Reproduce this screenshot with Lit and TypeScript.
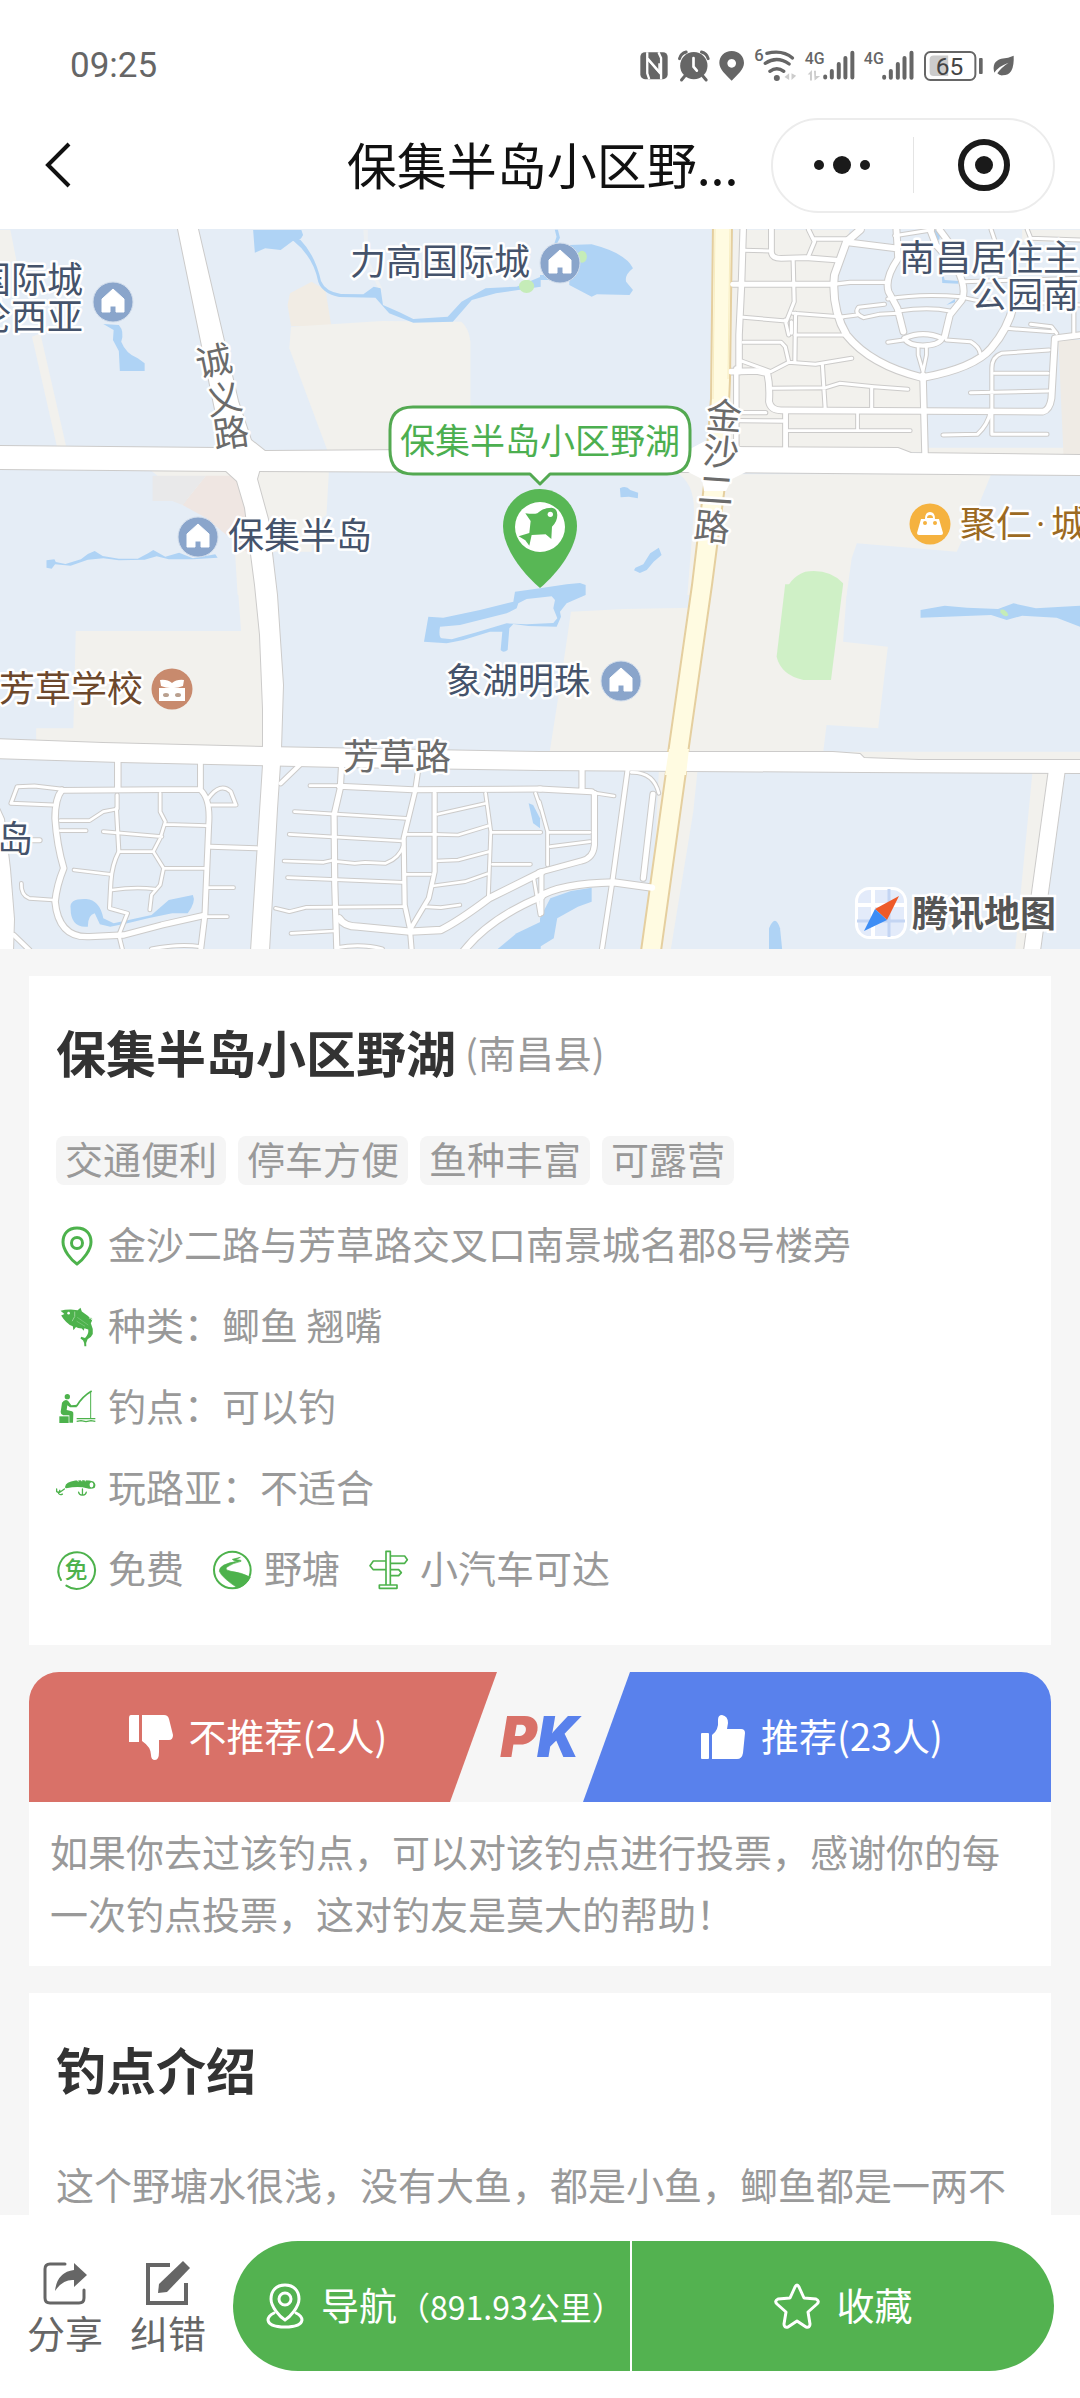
import { LitElement, html, svg, css } from "lit";
import { customElement } from "lit/decorators.js";

/* ---------- map data ---------- */

type Tile = "nw" | "ne" | "sw" | "se" | "lake" | "page";

const tileTransform: Record<Tile, string> = {
  nw: "translate(0 -4) scale(.3444 .3333)",
  ne: "translate(540 -4) scale(.3444 .3333)",
  sw: "translate(0 356) scale(.3444 .3333)",
  se: "translate(540 356) scale(.3444 .3333)",
  lake: "translate(380 166) scale(.3333)",
  page: "",
};

const LAND = "#f2f1ed";
const WATER = "#afd3f5";
const GREEN = "#cff0c6";

const areas: [Tile, string, string][] = [
  ["nw", LAND, "M0 14H30L48 108L0 118Z"],
  ["nw", LAND, "M93 335L117 325L192 664H165Z"],
  ["nw", "#f1ece4", "M842 205L905 170L945 195L962 303H845L835 240Z"],
  ["nw", LAND, "M845 305L1110 288L1340 290Q1362 310 1366 350V680H952L840 370Z"],
  ["nw", "#edf0f2", "M1055 14H1068V100L1112 195L1098 190L1060 100Z"],
  ["nw", LAND, "M440 738H955L948 870L905 900V980H770L745 1110H690L680 940L600 870Z"],
  ["nw", "#efe6e2", "M598 752H695L720 800V985L600 880L530 840Z"],
  ["nw", "#e9e9ea", "M443 752H598L530 840L500 828H443Z"],
  ["ne", LAND, "M562 14H900L850 180Q860 260 885 320Q940 410 1110 455V682H545Z"],
  ["ne", LAND, "M1400 14H1568V50H1400Z"],
  ["ne", LAND, "M1112 668H1568V690H1112Z"],
  ["ne", "#efebe5", "M1505 345H1568V690H1520Z"],
  ["ne", LAND, "M395 742Q460 780 444 900L428 1110H480L560 742Z"],
  ["ne", LAND, "M540 748H1310L1270 850L1210 980L920 955L905 1000L890 1112H480Z"],
  ["ne", GREEN, "M710 1112Q720 1060 770 1040Q840 1030 880 1075V1112Z"],
  ["sw", LAND, "M220 138H700L690 0H745L770 490L105 470V430H213Z"],
  ["se", LAND, "M90 80L245 72L445 68L373 502H28L60 290Z"],
  ["se", LAND, "M490 0H892L880 170L1010 185L982 430L832 420L822 505H425Z"],
  ["se", LAND, "M900 500H1568V528H900Z"],
  ["se", LAND, "M420 560H457L445 680L380 1092H350Z"],
  ["se", LAND, "M345 560H370L300 1092H292L330 880Z"],
  ["se", LAND, "M1430 560H1480L1408 1092H1380Z"],
  ["se", GREEN, "M712 -2H880L845 285L765 285Q700 270 687 215Z"],
  ["nw", WATER, "M735 15H875L880 30Q872 50 850 48L815 75L770 70L740 83Z"],
  ["nw", WATER, "M850 46L872 44Q915 90 932 168Q945 200 990 207L1055 208L1085 185L1105 190L1112 240L1160 262L1200 282L1300 275L1340 230L1410 190L1500 185L1570 155V185L1440 205L1370 225L1315 290L1200 293L1130 265L1090 218L985 216Q935 205 924 170Q910 95 850 46Z"],
  ["nw", "#c5ecb8", "M1507 184a22 20 0 1 0 44 0a22 20 0 1 0-44 0Z"],
  ["nw", WATER, "M300 297L345 300Q362 320 352 350Q365 385 400 400L420 415V438H348L345 378L328 345L330 315Z"],
  ["nw", WATER, "M135 1006L158 1003L162 1011L190 1017L235 1003L255 987L275 978L298 993L345 1001H400L430 985L445 975L480 995L520 983L560 1000L625 988L632 998L560 1003H490L455 994L420 1004L345 1006L300 1000L255 1004L205 1022L160 1018L150 1031L135 1028Z"],
  ["ne", WATER, "M43 14H52L58 38L50 55H42L48 35Z"],
  ["ne", WATER, "M0 150H30V165H0Z"],
  ["ne", WATER, "M85 60L150 58Q250 85 270 130Q245 150 250 170L270 195L260 210L165 208L150 215L85 180Z"],
  ["ne", "#c5ecb8", "M108 95a14 18 0 1 0 28 0a14 18 0 1 0-28 0Z"],
  ["ne", WATER, "M232 790Q250 780 262 795L285 803L284 820L258 815L234 817Z"],
  ["ne", WATER, "M345 968L353 990L330 1010L310 1035L290 1044L273 1036L277 1028L300 1018L320 985Z"],
  ["ne", WATER, "M1145 14H1162L1160 42L1150 50Z"],
  ["ne", WATER, "M1165 120L1175 165L1215 168V176L1168 174ZM1180 240L1205 222V232Z"],
  ["sw", WATER, "M205 970Q200 940 250 942Q290 945 300 1000L330 1015L440 990L490 945L560 930Q570 950 545 985L500 985L430 1000L370 1015L320 1025L290 1018L275 985Q255 990 255 1025Q205 1030 205 970Z"],
  ["sw", WATER, "M1535 655L1548 660L1568 700V730L1548 715Z"],
  ["sw", WATER, "M1445 1092L1500 1045L1570 1010V1092Z"],
  ["se", WATER, "M0 1092V1000L30 940L90 918L150 908V950L110 965L50 1000L40 1060L0 1085Z"],
  ["se", WATER, "M1105 75L1175 62L1240 68L1330 72L1375 55L1440 70L1568 62V125L1500 98L1400 92L1355 105L1310 90L1180 95L1105 98Z"],
  ["se", "#c5ecb8", "M1337 74Q1352 70 1360 90Q1350 100 1337 82Z"],
  ["se", WATER, "M665 1092V1030Q683 985 697 1030L703 1092Z"],
  ["lake", WATER, "M405 590L480 580L560 568L600 564L617 570V600L560 625L540 650L543 665L530 695L445 693L400 687L388 700L383 765Q370 775 362 765L367 710L330 710L250 735L200 745L132 740L145 665L190 668L300 645L400 620ZM415 625L440 612L515 604L525 615L520 640L532 670L520 684L440 688L380 685L290 712L215 733L185 730Q175 725 180 695L240 690L380 655L410 640Z"],
];

const roads: [Tile, number, string][] = [
  /* north-east estate */
  ["ne", 16, "M590 14L585 180L578 330V440"],
  ["ne", 13, "M570 430V665"],
  ["ne", 14, "M672 14V80Q672 100 700 100L770 98L860 105"],
  ["ne", 9, "M590 76L670 78M735 105L738 230L715 290M730 290V325M712 285L722 330M740 330H890M735 265L880 276M590 277L715 288M742 265L740 410"],
  ["ne", 9, "M590 352H700L712 365L722 410M585 408L670 440L722 412L800 418L905 400M675 490L830 488L870 475L970 485L1068 493M820 420L828 550M963 485V550"],
  ["ne", 10, "M780 14L797 50L780 92M795 42H890M850 178L900 172L1010 172"],
  ["ne", 15, "M560 178H850"],
  ["ne", 20, "M930 14L890 50L855 150Q845 250 890 330Q960 420 1110 458Q1260 430 1310 370Q1360 310 1375 240"],
  ["ne", 17, "M895 52L1035 70M1035 14L1040 100Q1000 160 1012 200L1038 250L1055 320M1135 20L1150 60L1210 130Q1240 190 1225 225L1190 270L1175 335M1160 14L1200 70"],
  ["ne", 9, "M1030 32L1140 14M1010 222Q1100 205 1225 215M1230 218L1330 240M880 275L920 270M1040 265L985 268L940 278Q910 265 925 247L1000 238M1040 258Q1130 245 1190 258M1055 345L1010 352M1180 345L1250 350Q1275 365 1278 385"],
  ["ne", 13, "M1058 340Q1112 315 1168 340Q1160 360 1112 362Q1070 362 1058 340"],
  ["ne", 8, "M1098 365V390L1112 440L1122 390V365"],
  ["ne", 16, "M1112 450L1118 690"],
  ["ne", 17, "M555 440L630 438L660 445Q668 480 665 530Q670 556 700 556L1110 558L1460 560Q1480 555 1485 520L1495 340L1570 330"],
  ["ne", 9, "M1355 310L1490 320M1425 298L1485 305L1500 325M1550 200V330M1478 375L1340 385Q1312 395 1312 430V628H1472M1320 445H1475M1250 503L1475 498M1308 560Q1300 600 1270 628L1170 630"],
  ["ne", 9, "M1310 14L1325 60M1415 14L1425 40L1568 45M1230 170L1568 160M1400 230L1568 240"],
  ["ne", 10, "M580 563H655M580 587L705 588"],
  ["ne", 14, "M713 562V680"],
  ["ne", 8, "M720 617H1075M922 565V615"],
  /* south-west estate */
  ["sw", 16, "M342 520V610M180 615Q160 640 160 700Q165 780 185 850Q165 900 160 950Q170 1060 260 1055L360 1050L470 1020L590 992"],
  ["sw", 14, "M180 616L580 613Q612 640 606 720L595 990L583 1092M582 530V612"],
  ["sw", 9, "M175 612L100 603L50 605L32 655L155 660M605 640Q640 590 670 620L685 660L610 660M340 630V670M338 670L345 800Q325 840 322 890L318 970L370 985L345 1050L355 1092"],
  ["sw", 8, "M175 707H260L300 680L340 672M175 737H250M300 740L470 755M465 625V680L480 710L465 760L445 800L475 850L465 900L440 930L435 975M345 800H445M480 718L600 722M475 850H595M215 855L320 868M325 915Q390 905 450 912M605 908H678M590 995H660M62 895Q60 930 85 940L155 945"],
  ["sw", 12, "M612 785L745 790M60 766H115M40 1050L85 1095M815 595L875 535"],
  ["sw", 15, "M985 604L1200 614L1570 612M992 540L988 610L970 690L972 900L978 1092"],
  ["sw", 12, "M1215 550L1205 620L1172 760L1175 960L1190 1030L1195 1092M1262 625V860L1245 940L1190 1035"],
  ["sw", 8, "M900 602H985M855 680L1180 700M840 748L1170 768M825 828L940 832L970 825M835 878L1170 892M800 970L840 980L890 967L1170 965M845 1045L970 1038M980 830L1030 835L1060 832L1120 835Q1160 820 1172 780"],
  ["sw", 19, "M985 1000Q1000 1025 1040 1025L1190 1040L1280 1035Q1330 1010 1420 940L1572 862M1345 1100Q1420 1000 1572 935"],
  ["sw", 8, "M1180 748H1262L1330 750L1420 722M1270 688L1412 655M1175 868H1250M1262 828L1330 825L1420 800M1255 903L1350 890L1420 865M1230 965L1280 968L1335 960M1410 625L1425 740L1418 935M1425 742H1570M1430 838H1540M1555 625L1570 670M1550 880L1568 990"],
  ["sw", 9, "M440 1092Q520 1075 583 1085M978 1088Q1050 1075 1110 1092"],
  ["se", 15, "M-2 612L150 620M122 550V612M158 625V780Q155 820 120 828L-2 862"],
  ["se", 8, "M165 625L215 633M-2 650L22 740V840M22 742H145M30 785L145 770M265 562Q330 560 345 625"],
  ["se", 19, "M-2 935Q60 895 215 892L325 908"],
  ["se", 12, "M255 550L210 890L180 1092M4 870V985"],
  ["se", 15, "M328 628L300 880"],
];

const mainRoads: string[] = [
  "M-5 217L218 219L265 222L420 221L690 221L730 218L898 219L911 224L1085 226V246L700 243L540 243L225 242L-5 240Z",
  "M178 0H198L238 172L251 211L265 222L257 250L268 290L277 366L283 456L281 520L277 580L269 722H251L263 536V480L260 406L255 356L245 279L237 252L226 242L219 200Z",
  "M-5 510L103 514L265 518L540 523L833 523L860 525L864 529L919 531L1085 531V544L864 543L540 541L340 538L120 533L-5 529Z",
  "M1049 540H1065L1040 722H1024Z",
  "M-5 570L4 590L10 640L14 690L13 722H-5Z",
];

const yellowRoad =
  "M713 -5L711 170L704 256L692 356L668 524L666 543L641 722H661L686 543L688 524L712 356L726 249L730 150L732 -5Z";

type Label = {
  x: number;
  y: number;
  text: string;
  more?: { x: number; dy: number; text: string }[];
  fill?: string;
  anchor?: string;
  turn?: number;
};

const labels: Label[] = [
  { x: 83, y: 51, text: "国际城", more: [{ x: 83, dy: 37, text: "伦西亚" }], anchor: "end" },
  { x: 530, y: 33, text: "力高国际城", anchor: "end" },
  { x: 899, y: 29, text: "南昌居住主", more: [{ x: 971, dy: 37, text: "公园南" }] },
  { x: 228, y: 307, text: "保集半岛" },
  {
    x: 960,
    y: 295,
    text: "聚仁",
    more: [
      { x: 1036, dy: 0, text: "·" },
      { x: 1051, dy: 0, text: "城" },
    ],
    fill: "#9c6a22",
  },
  { x: -1, y: 460, text: "芳草学校", fill: "#6d482c" },
  { x: 446, y: 452, text: "象湖明珠" },
  { x: 343, y: 528, text: "芳草路", fill: "#6b6b6b" },
  { x: -3, y: 610, text: "岛" },
  { x: 214, y: 132, text: "诚", fill: "#6b6b6b", anchor: "middle", turn: -12 },
  { x: 224, y: 170, text: "义", fill: "#6b6b6b", anchor: "middle", turn: -12 },
  { x: 231, y: 204, text: "路", fill: "#6b6b6b", anchor: "middle", turn: -8 },
  { x: 724, y: 187, text: "金", fill: "#6b6b6b", anchor: "middle", turn: 4 },
  { x: 721, y: 223, text: "沙", fill: "#6b6b6b", anchor: "middle", turn: 6 },
  { x: 716, y: 261, text: "二", fill: "#6b6b6b", anchor: "middle", turn: 4 },
  { x: 712, y: 298, text: "路", fill: "#6b6b6b", anchor: "middle", turn: 6 },
];

const houses: [number, number][] = [
  [113, 73],
  [560, 34],
  [198, 308],
  [621, 452],
];

@customElement("spot-map")
class SpotMap extends LitElement {
  static styles = css`
    :host {
      display: block;
    }
    .map {
      display: block;
      width: 100%;
      aspect-ratio: 3 / 2;
      background: #e5edf6;
      font-family: "Noto Sans CJK SC", sans-serif;
    }
    .label {
      font-size: 36px;
      stroke: #fff;
      stroke-width: 5px;
      stroke-linejoin: round;
      paint-order: stroke;
    }
    .dot {
      font-family: Roboto, sans-serif;
    }
    .brand {
      font-size: 36px;
      font-weight: 700;
      fill: #555;
      stroke: #fff;
      stroke-width: 5px;
      paint-order: stroke;
    }
    .bubble-text {
      font-size: 35px;
      fill: #4caf50;
    }
  `;

  private label(l: Label) {
    return svg`<text class="label" x=${l.x} y=${l.y + 13} fill=${l.fill ?? "#45536b"}
      text-anchor=${l.anchor ?? "start"}
      transform=${l.turn ? `rotate(${l.turn} ${l.x} ${l.y})` : ""}>${l.text}${(l.more ?? []).map(
        (m) => svg`<tspan class=${m.text === "·" ? "dot" : ""} x=${m.x} dy=${m.dy}>${m.text}</tspan>`
      )}</text>`;
  }

  render() {
    return html`<svg class="map" viewBox="0 0 1080 720" preserveAspectRatio="xMidYMid slice" role="img" aria-label="地图">
      <rect width="1080" height="720" fill="#e5edf6"></rect>
      ${areas.map(([t, fill, d]) => svg`<path transform=${tileTransform[t]} fill=${fill} fill-rule="evenodd" d=${d}></path>`)}
      <g fill="none" stroke="#cccbca" stroke-linecap="round" stroke-linejoin="round">
        ${roads.map(([t, w, d]) => svg`<path transform=${tileTransform[t]} stroke-width=${w + 6} d=${d}></path>`)}
        ${mainRoads.map((d) => svg`<path stroke-width="2" d=${d}></path>`)}
      </g>
      <path d=${yellowRoad} fill="#fffbe1" stroke="#e5cf9f" stroke-width="2"></path>
      <g fill="none" stroke="#fff" stroke-linecap="round" stroke-linejoin="round">
        ${roads.map(([t, w, d]) => svg`<path transform=${tileTransform[t]} stroke-width=${w} d=${d}></path>`)}
      </g>
      <g fill="#fff">${mainRoads.map((d) => svg`<path d=${d}></path>`)}</g>
      <path d="M690 220L705 212H729L746 221V243L732 250L726 262H704L702 250L688 243Z" fill="#fff"></path>
      <path d="M669 520H689L686 546H665Z" fill="#fffbe1"></path>
      <path d="M715 0L713 170M730 0L728 150" stroke="#f7ecc0" stroke-width="1"></path>
      ${labels.map((l) => this.label(l))}
      ${houses.map(
        ([x, y]) => svg`<g transform=${`translate(${x} ${y})`}>
          <circle r="20" fill="#8aa5cb" stroke="#d3deec" stroke-width="1"></circle>
          <path d="M0-13L11-3V10H3V4H-3V10H-11V-3Z" fill="#fff" stroke="#fff" stroke-linejoin="round"></path></g>`
      )}
      <g transform="translate(930 295)">
        <circle r="20.500" fill="#f5b23f"></circle>
        <path d="M-9-5H-5Q-5-12 0-12Q5-12 5-5H9L13 9Q13 11 11 11H-11Q-13 11-13 9Z" fill="#fff"></path>
        <path d="M-3-6Q-3-9 0-9Q3-9 3-6Z" fill="#f5b23f"></path>
        <circle cx="-5" cy="-1" r="2" fill="#f5b23f"></circle><circle cx="5" cy="-1" r="2" fill="#f5b23f"></circle>
      </g>
      <g transform="translate(172 460)">
        <circle r="20.500" fill="#c88a6d"></circle>
        <path d="M-12-9Q-5-10 0-6Q5-10 12-9L11-3Q6-1 2-1H13V12H-13V-1H-2Q-6-1-11-3Z" fill="#fff"></path>
        <ellipse cx="-6" cy="6" rx="3" ry="2" fill="#b9a08f"></ellipse><ellipse cx="6" cy="6" rx="3" ry="2" fill="#b9a08f"></ellipse>
      </g>
      <!-- selected spot -->
      <path d="M413 178H667Q690 178 690 201V221Q690 245 667 245H550L540 255L530 245H413Q390 245 390 221V201Q390 178 413 178Z"
        fill="#fff" stroke="#53a951" stroke-width="3" stroke-linejoin="round"></path>
      <text class="bubble-text" x="540" y="225" text-anchor="middle">保集半岛小区野湖</text>
      <path d="M540 260C561 260 577 277 577 297C577 318 559 343 540 359C521 343 503 318 503 297C503 277 519 260 540 260Z" fill="#58b755"></path>
      <circle cx="540" cy="298" r="25" fill="#fff"></circle>
      <g transform="translate(380 166) scale(.3333)">
        <path d="M436 355Q462 358 472 355Q490 338 515 338Q532 340 532 360Q532 380 516 395L514 432L497 418L455 420L448 452L436 436L416 424L448 414L452 378Z" fill="#58b755"></path>
        <circle cx="511" cy="358" r="8" fill="#fff"></circle>
      </g>
      <!-- map provider mark -->
      <g transform="translate(855 658)">
        <rect x="1.500" y="1.500" width="49" height="49" rx="13" fill="#e3ebfa" stroke="#fff" stroke-width="3"></rect>
        <path d="M18 2V50M2 18H50" stroke="#fff" stroke-width="4"></path>
        <path d="M34 2V50M2 34H50" stroke="#c4d5f3" stroke-width="3"></path>
        <path d="M44 9L32 33L20 22Z" fill="#ee5a29"></path>
        <path d="M20 22L32 33L9 44Z" fill="#3d8df5"></path>
      </g>
      <text class="brand" x="912" y="698">腾讯地图</text>
    </svg>`;
  }
}

/* ---------- icons ---------- */

const statusIcon = (x0: number, x1: number, body: unknown) =>
  html`<svg width=${Math.round((x1 - x0) / 3)} height="36" viewBox=${`${x0} 54 ${x1 - x0} 108`} aria-hidden="true">${body}</svg>`;

const bars = (x: number) =>
  svg`<g stroke="#666" stroke-width="12" stroke-linecap="round">
    <path d=${`M${x} 140V143M${x + 20} 123V143M${x + 41} 102V143M${x + 61} 84V143M${x + 82} 68V143`}></path></g>`;

const infoIcon = (viewBox: string, body: unknown) =>
  html`<svg class="info-icon" viewBox=${viewBox} aria-hidden="true">${body}</svg>`;

const pinIcon = infoIcon(
  "0 0 40 40",
  svg`<path d="M21 2C30 2 35 8 35 16C35 24 27 34 21 38C15 34 7 24 7 16C7 8 12 2 21 2Z" fill="none" stroke="#4db24c" stroke-width="3"></path>
  <circle cx="21" cy="17" r="5.500" fill="none" stroke="#4db24c" stroke-width="3"></circle>`
);
const fishIcon = infoIcon(
  "48 52 120 124",
  svg`<path d="M60 64Q72 60 92 60L113 62L122 54L126 66Q146 78 158 94L154 102Q162 118 160 136Q155 148 144 152Q138 162 140 174L134 174Q134 162 130 156L122 150L124 144L136 148Q148 136 146 122L134 118L132 126L126 119Q112 118 108 114L100 124L98 112Q78 104 62 78L72 74Z" fill="#4db24c"></path>
  <circle cx="85" cy="71" r="4" fill="#fff"></circle>
  <path d="M104 66Q108 82 96 96M148 88Q158 84 158 90" stroke="#9bd49a" stroke-width="3" fill="none"></path>
  <path d="M112 84L146 108M110 96L136 112" stroke="#8acb89" stroke-width="2"></path>`
);
const anglerIcon = infoIcon(
  "50 288 120 120",
  svg`<circle cx="84" cy="314" r="8" fill="#4db24c"></circle>
  <path d="M68 332Q76 320 86 326L96 340L114 338L112 346H92L84 340L82 354L98 358Q103 360 102 366L101 392H90V370H72Q64 368 64 360Z" fill="#4db24c"></path>
  <rect x="60" y="373" width="28" height="20" fill="#4db24c"></rect>
  <path d="M112 342Q128 314 157 297" stroke="#4db24c" stroke-width="5" fill="none"></path>
  <path d="M154 298V378" stroke="#4db24c" stroke-width="3"></path>
  <path d="M112 380H168M112 388L125 386L140 389L155 386L168 388" stroke="#4db24c" stroke-width="4" fill="none"></path>`
);
const lureIcon = infoIcon(
  "50 534 124 120",
  svg`<path d="M78 588Q80 572 110 568Q150 564 166 571Q176 580 170 590Q162 596 146 592Q120 584 82 592Q78 592 78 588Z" fill="#4db24c"></path>
  <path d="M116 564L119 571M128 563L130 570M140 563L141 570" stroke="#fff" stroke-width="3"></path>
  <ellipse cx="160" cy="581" rx="6" ry="8" fill="#fff"></ellipse>
  <path d="M132 594V612M120 604Q122 614 132 613Q142 614 144 604M76 594L62 604M52 594V602Q56 606 64 602M62 598L58 608Q62 614 70 610" stroke="#4db24c" stroke-width="4" fill="none" stroke-linecap="round"></path>`
);
const freeIcon = infoIcon(
  "51 778 120 120",
  svg`<path d="M66 868A55 55 0 1 1 82 885" fill="none" stroke="#4db24c" stroke-width="6" stroke-linecap="round"></path>
  <text x="111" y="863" font-size="68" font-weight="500" text-anchor="middle" fill="#4db24c">免</text>`
);
const pondIcon = infoIcon(
  "519 778 120 120",
  svg`<circle cx="580" cy="838" r="55" fill="none" stroke="#4db24c" stroke-width="6"></circle>
  <path d="M604 800L580 806Q584 812 596 812Q540 820 541 842Q550 862 596 892Q622 884 634 860Q610 846 576 842Q552 836 566 828Q580 818 606 812Q610 808 590 807Z" fill="#4db24c" stroke="#4db24c" stroke-width="2" stroke-linejoin="round"></path>`
);
const signIcon = infoIcon(
  "988 778 120 120",
  svg`<g fill="none" stroke="#4db24c" stroke-width="5" stroke-linejoin="round">
  <path d="M1042 882V782H1055V882M1022 883H1075V893H1022ZM1055 796H1098L1106 807L1098 818H1055M1042 811H1004L994 825L1004 837H1042M1055 837H1080L1088 846L1080 855H1055"></path></g>`
);

const thumbUp = html`<svg width="44" height="45" viewBox="0 0 44 45" fill="#fff" aria-hidden="true">
  <rect x="0" y="18" width="8" height="26" rx="1"></rect>
  <path d="M11 20Q18 15 17 5Q17 0 21 0Q27 1 27 8L26 14H40Q44 14 44 18L42 38Q41 44 36 44H11Z"></path>
</svg>`;
const thumbDown = html`<svg width="44" height="45" viewBox="0 0 44 45" fill="#fff" aria-hidden="true">
  <path d="M2 0H10V27H0V3Q0 0 2 0Z"></path>
  <path d="M13 0H35Q39 0 40 4L44 20Q44 25 40 25H30V37Q30 45 26 45Q22 45 22 40Q22 32 13 26Z"></path>
</svg>`;

/* ---------- page ---------- */

@customElement("app-root")
class AppRoot extends LitElement {
  static styles = css`
    :host {
      display: flex;
      flex-direction: column;
      height: 100vh;
      overflow: hidden;
      background: #f6f6f6;
      color: #999;
      font-family: "Noto Sans CJK SC", sans-serif;
      font-size: 38px;
      line-height: 52px;
    }
    * {
      box-sizing: border-box;
    }
    svg {
      flex: none;
      overflow: visible;
    }
    button {
      margin: 0;
      padding: 0;
      border: 0;
      background: none;
      color: inherit;
      font: inherit;
      display: flex;
      align-items: center;
      white-space: nowrap;
    }
    h1,
    h2,
    p,
    ul {
      margin: 0;
      padding: 0;
      font-weight: 400;
      list-style: none;
    }
    .top {
      flex: none;
      background: #fff;
    }
    .status {
      display: flex;
      align-items: center;
      justify-content: space-between;
      padding: 45px 66px 15px 70px;
      color: #666;
      font-family: Roboto, sans-serif;
      font-size: 35px;
      line-height: 41px;
    }
    .status-icons {
      display: flex;
      align-items: center;
      gap: 10px;
    }
    .nav {
      display: grid;
      grid-template-columns: 1fr auto 1fr;
      align-items: center;
      height: 128px;
      padding: 0 25px 0 44px;
    }
    .nav-title {
      color: #111;
      font-size: 50px;
      line-height: 60px;
      margin-left: -14px;
      padding-bottom: 5px;
    }
    .capsule {
      justify-self: end;
      display: flex;
      align-items: center;
      width: 284px;
      height: 95px;
      border: 2px solid #ececec;
      border-radius: 48px;
    }
    .capsule button {
      flex: 1;
      justify-content: center;
      height: 100%;
    }
    .capsule-line {
      width: 1px;
      height: 56px;
      background: #e4e4e4;
    }
    .scroll {
      flex: 1;
      min-height: 0;
      overflow: hidden;
      display: flex;
      flex-direction: column;
    }
    .cards {
      display: flex;
      flex-direction: column;
      flex: 1 0 auto;
      gap: 27px;
      padding: 27px 29px 0;
    }
    .card {
      background: #fff;
      padding: 48px 27px 47px;
    }
    .heading {
      display: flex;
      align-items: center;
      gap: 9px;
      padding-bottom: 5px;
    }
    .title {
      color: #333;
      font-size: 50px;
      line-height: 55px;
      font-weight: 700;
    }
    .tags {
      display: flex;
      gap: 12px;
      margin: 52px 0 32px;
    }
    .tag {
      padding: 0 9px 5px;
      border-radius: 8px;
      background: #f5f5f5;
      line-height: 44px;
    }
    .rows {
      display: flex;
      flex-direction: column;
      gap: 24px;
    }
    .row,
    .fact {
      display: flex;
      align-items: center;
    }
    .row {
      gap: 28px;
    }
    .fact {
      gap: 12px;
    }
    .fact-text {
      padding-bottom: 5px;
    }
    .info-icon {
      width: 40px;
      height: 40px;
    }
    .vote-head {
      display: grid;
      grid-template-columns: 1fr 86px 1fr;
      height: 130px;
    }
    .vote-button {
      justify-content: center;
      gap: 16px;
      color: #fff;
    }
    .vote-label {
      padding-bottom: 5px;
    }
    .vote-down {
      background: #d97168;
      border-radius: 30px 0 0 0;
      padding-right: 10px;
      clip-path: polygon(0 0, 100% 0, calc(100% - 47px) 100%, 0 100%);
    }
    .vote-up {
      background: #5981ec;
      border-radius: 0 30px 0 0;
      padding-left: 10px;
      clip-path: polygon(47px 0, 100% 0, 100% 100%, 0 100%);
    }
    .pk {
      display: flex;
      align-items: center;
      justify-content: center;
      font: italic 900 56px/60px Inter, sans-serif;
      color: #5981ec;
    }
    .pk-p {
      color: #d97168;
    }
    .vote-text {
      padding: 18px 21px 22px;
      background: #fff;
      line-height: 62px;
    }
    .intro {
      flex: 1 0 auto;
      padding-top: 48px;
      padding-bottom: 0;
    }
    .intro-text {
      margin-top: 62px;
    }
    .bar {
      flex: none;
      display: flex;
      align-items: center;
      gap: 27px;
      padding: 26px 26px 27px 27px;
      background: #fff;
    }
    .tool {
      flex-direction: column;
      gap: 8px;
      color: #666;
      line-height: 38px;
    }
    .actions {
      flex: 1;
      display: grid;
      grid-template-columns: 397fr 422fr;
      gap: 2px;
      height: 130px;
      border-radius: 65px;
      overflow: hidden;
      color: #fff;
    }
    .action {
      justify-content: center;
      background: #53b250;
      gap: 17px;
    }
    .action-label {
      padding-bottom: 5px;
    }
    .action-nav {
      justify-content: flex-start;
      padding-left: 33px;
    }
    .distance {
      font-size: 32px;
      margin-left: -16px;
    }
  `;

  private tags = ["交通便利", "停车方便", "鱼种丰富", "可露营"];

  private rows = [
    [{ icon: pinIcon, text: "金沙二路与芳草路交叉口南景城名郡8号楼旁" }],
    [{ icon: fishIcon, text: "种类：鲫鱼 翘嘴" }],
    [{ icon: anglerIcon, text: "钓点：可以钓" }],
    [{ icon: lureIcon, text: "玩路亚：不适合" }],
    [
      { icon: freeIcon, text: "免费" },
      { icon: pondIcon, text: "野塘" },
      { icon: signIcon, text: "小汽车可达" },
    ],
  ];

  private statusIcons() {
    return html`<div class="status-icons">
      ${statusIcon(62, 147, svg`<rect x="63" y="66" width="83" height="82" rx="14" fill="#666"></rect>
        <path d="M84 66V130L90 148M84 84L124 130M126 148V84L118 66" stroke="#fff" stroke-width="7" fill="none"></path>
        <path d="M88 91L120 128V100" stroke="#fff" stroke-width="5" fill="none"></path>`)}
      ${statusIcon(180, 272, svg`<circle cx="227" cy="107" r="41" fill="#666"></circle>
        <path d="M184 86Q188 70 204 66M270 86Q266 70 250 66M200 138L190 150M254 138L264 150" stroke="#666" stroke-width="9" fill="none" stroke-linecap="round"></path>
        <path d="M226 84V110L236 122" stroke="#fff" stroke-width="8" fill="none" stroke-linecap="round"></path>`)}
      ${statusIcon(305, 380, svg`<path fill-rule="evenodd" d="M343 63C365 63 380 79 380 99C380 118 361 134 343 152C325 134 306 118 306 99C306 79 321 63 343 63ZM343 87a13 13 0 1 0 .1 0Z" fill="#666"></path>`)}
      ${statusIcon(405, 530, svg`<text x="405" y="94" font-size="50" font-weight="500" fill="#666">6</text>
        <path d="M443 70Q490 58 520 84M438 100Q474 76 510 102M452 124Q473 108 494 124" stroke="#666" stroke-width="10" fill="none" stroke-linecap="round"></path>
        <circle cx="473" cy="144" r="9" fill="#666"></circle>
        <path d="M510 130V150L496 141ZM517 130V150L531 137Z" fill="#ccc"></path>`)}
      ${statusIcon(555, 703, svg`<text x="551" y="102" font-size="48" font-weight="500" fill="#666">4G</text>
        <path d="M560 134L573 120V152H567V134ZM579 122H585V138H598L581 152Z" fill="#ccc"></path>${bars(613)}`)}
      ${statusIcon(735, 881, svg`<text x="731" y="102" font-size="48" font-weight="500" fill="#666">4G</text>${bars(792)}`)}
      ${statusIcon(917, 1095, svg`<rect x="920" y="66" width="152" height="84" rx="16" fill="none" stroke="#666" stroke-width="6"></rect>
        <path d="M946 76H990V138H946Q934 138 934 126V88Q934 76 946 76Z" fill="#ccc"></path>
        <text x="994" y="135" font-size="74" text-anchor="middle" fill="#444">65</text>
        <rect x="1083" y="84" width="11" height="48" rx="3" fill="#666"></rect>`)}
      ${statusIcon(1115, 1178, svg`<path d="M1177 77Q1180 136 1144 136Q1134 137 1128 130Q1140 112 1162 98Q1132 108 1119 128Q1110 94 1140 86Q1162 84 1177 77Z" fill="#666"></path>`)}
    </div>`;
  }

  render() {
    return html`
      <header class="top">
        <div class="status"><span>09:25</span>${this.statusIcons()}</div>
        <div class="nav">
          <button aria-label="返回">
            <svg width="28" height="48" viewBox="0 0 28 48"><path d="M25 3L4 24L25 45" fill="none" stroke="#111" stroke-width="4"></path></svg>
          </button>
          <h1 class="nav-title">保集半岛小区野...</h1>
          <div class="capsule">
            <button aria-label="更多">
              <svg width="60" height="20" viewBox="0 0 60 20" fill="#1a1a1a"><circle cx="6" cy="10" r="5"></circle><circle cx="29" cy="10" r="9"></circle><circle cx="52" cy="10" r="5"></circle></svg>
            </button>
            <span class="capsule-line"></span>
            <button aria-label="关闭">
              <svg width="54" height="54" viewBox="0 0 54 54"><circle cx="28" cy="27" r="23" fill="none" stroke="#1a1a1a" stroke-width="6"></circle><circle cx="28" cy="27" r="9" fill="#1a1a1a"></circle></svg>
            </button>
          </div>
        </div>
      </header>
      <main class="scroll">
        <spot-map></spot-map>
        <div class="cards">
          <section class="card">
            <div class="heading"><h2 class="title">保集半岛小区野湖</h2><span>(南昌县)</span></div>
            <ul class="tags">${this.tags.map((t) => html`<li class="tag">${t}</li>`)}</ul>
            <div class="rows">
              ${this.rows.map(
                (row) => html`<div class="row">
                  ${row.map((f) => html`<div class="fact">${f.icon}<span class="fact-text">${f.text}</span></div>`)}
                </div>`
              )}
            </div>
          </section>
          <section>
            <div class="vote-head">
              <button class="vote-button vote-down">${thumbDown}<span class="vote-label">不推荐(2人)</span></button>
              <div class="pk"><span class="pk-p">P</span><span>K</span></div>
              <button class="vote-button vote-up">${thumbUp}<span class="vote-label">推荐(23人)</span></button>
            </div>
            <p class="vote-text">如果你去过该钓点，可以对该钓点进行投票，感谢你的每一次钓点投票，这对钓友是莫大的帮助！</p>
          </section>
          <section class="card intro">
            <h2 class="title">钓点介绍</h2>
            <p class="intro-text">这个野塘水很浅，没有大鱼，都是小鱼，鲫鱼都是一两不</p>
          </section>
        </div>
      </main>
      <footer class="bar">
        <button class="tool">
          <svg width="44" height="44" viewBox="0 0 44 44"><path d="M22 3H7Q2 3 2 8V37Q2 42 7 42H36Q41 42 41 37V29" fill="none" stroke="#666" stroke-width="3" stroke-linecap="round"></path><path d="M31 2L44 14L31 26V19Q20 18 12 30Q14 11 31 9Z" fill="#666"></path></svg>
          <span>分享</span>
        </button>
        <button class="tool">
          <svg width="44" height="44" viewBox="0 0 44 44"><path d="M24 4H2V42H40V22" fill="none" stroke="#666" stroke-width="4"></path><path d="M37 0L44 7L21 31L12 32L13 23Z" fill="#666"></path></svg>
          <span>纠错</span>
        </button>
        <div class="actions">
          <button class="action action-nav">
            <svg width="38" height="46" viewBox="0 0 38 46" fill="none" stroke="#fff" stroke-width="3"><path d="M19 2C28 2 33 8 33 16C33 24 24 34 19 37C14 34 5 24 5 16C5 8 10 2 19 2Z"></path><circle cx="19" cy="16" r="6"></circle><path d="M8 30Q2 33 2 37Q3 44 19 44Q35 44 36 37Q36 33 30 30" stroke-linecap="round"></path></svg>
            <span class="action-label">导航</span><span class="distance">（891.93公里）</span>
          </button>
          <button class="action">
            <svg width="46" height="46" viewBox="0 0 46 46"><path d="M23 2Q24 2 25 4L30 15L42 16Q46 18 43 21L34 29L36 41Q36 45 32 44L23 38L14 44Q10 45 10 41L12 29L3 21Q0 18 4 16L16 15L21 4Q22 2 23 2Z" fill="none" stroke="#fff" stroke-width="3" stroke-linejoin="round"></path></svg>
            <span class="action-label">收藏</span>
          </button>
        </div>
      </footer>
    `;
  }
}
